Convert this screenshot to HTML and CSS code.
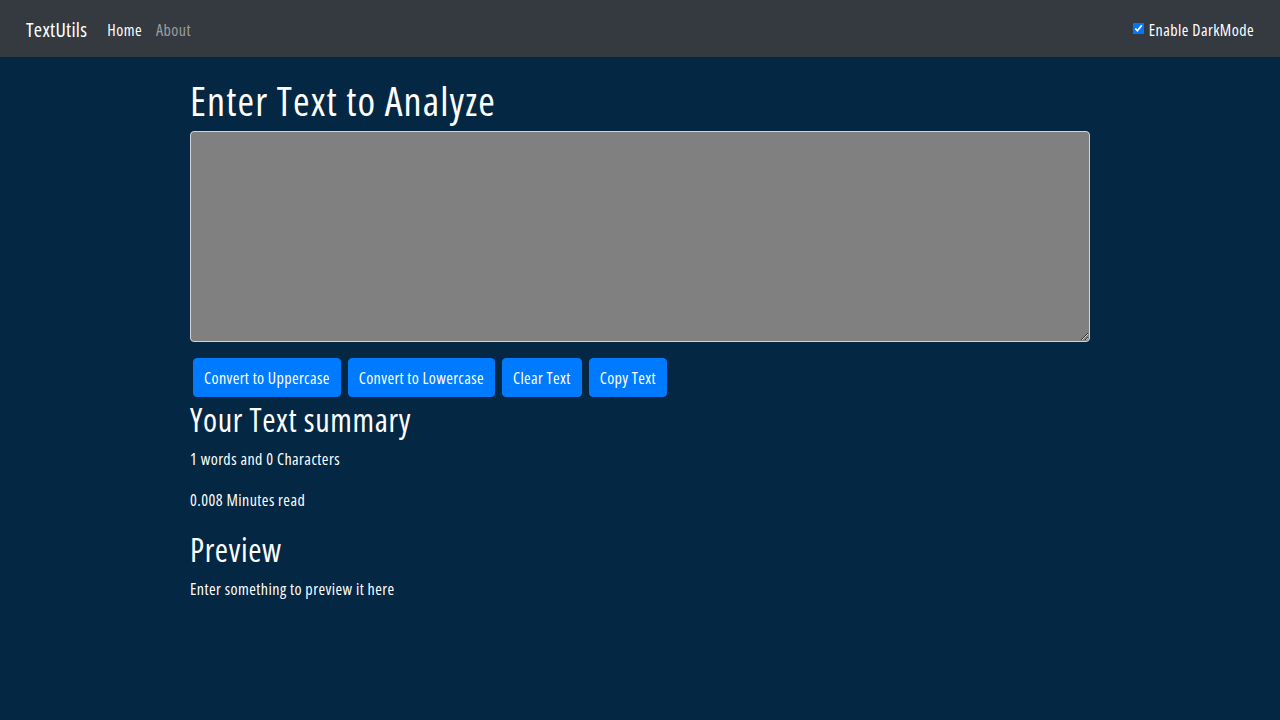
FILE: index.html
```html
<!DOCTYPE html>
<html lang="en">
<head>
<meta charset="utf-8">
<title>TextUtils</title>
<link rel="stylesheet" href="styles.css">
</head>
<body>
<nav class="navbar">
  <div class="nav-left">
    <a class="brand" href="#">TextUtils</a>
    <a class="nav-link active" href="#">Home</a>
    <a class="nav-link" href="#">About</a>
  </div>
  <label class="switch">
    <input type="checkbox" checked>
    <span>Enable DarkMode</span>
  </label>
</nav>
<main class="container">
  <h1 class="title">Enter Text to Analyze</h1>
  <textarea class="text-box" rows="8"></textarea>
  <div class="actions">
    <button class="btn">Convert to Uppercase</button>
    <button class="btn">Convert to Lowercase</button>
    <button class="btn">Clear Text</button>
    <button class="btn">Copy Text</button>
  </div>
  <h2 class="section">Your Text summary</h2>
  <p class="line">1 words and 0 Characters</p>
  <p class="line">0.008 Minutes read</p>
  <h2 class="section preview">Preview</h2>
  <p class="line">Enter something to preview it here</p>
</main>
</body>
</html>
```

FILE: styles.css
```css
* { box-sizing: border-box; }
html, body { margin: 0; padding: 0; }
body {
  background: #042743;
  color: #ffffff;
  font-family: "Open Sans", sans-serif;
  font-stretch: condensed;
  letter-spacing: 0.028em;
  font-size: 16px;
  line-height: 24px;
  min-height: 720px;
}
.navbar {
  height: 57px;
  background: #343a40;
  display: flex;
  align-items: center;
  justify-content: space-between;
  padding: 2px 26px 0;
}
.nav-left { display: flex; align-items: center; }
.brand {
  color: #fff;
  text-decoration: none;
  font-size: 20px;
  letter-spacing: 0.015em;
  margin-right: 20px;
}
.nav-link {
  color: rgba(255,255,255,0.5);
  text-decoration: none;
  font-size: 16px;
  margin-right: 14px;
}
.nav-link.active { color: #fff; }
.switch {
  display: flex;
  align-items: center;
  gap: 5px;
  font-size: 16px;
  color: #fff;
}
.switch input { margin: -2px 0 0; width: 11px; height: 11px; }
.container {
  width: 900px;
  margin: 0 auto;
  padding-top: 20px;
  display: flex;
  flex-direction: column;
  align-items: flex-start;
}
.title {
  font-size: 40px;
  font-weight: 400;
  line-height: 48px;
  letter-spacing: 0.028em;
  margin: 0 0 6px;
}
.text-box {
  width: 900px;
  height: 211px;
  background: #808080;
  color: #fff;
  border: 1px solid #ced4da;
  border-radius: 4px;
  padding: 6px 12px;
  font: inherit;
  margin-bottom: 16px;
}
.actions { display: flex; gap: 7px; padding-left: 3px; }
.btn {
  background: #007bff;
  color: #fff;
  border: 1px solid #007bff;
  border-radius: 4px;
  height: 39px;
  padding: 1px 10px 0;
  font: inherit;
  font-size: 16px;
  letter-spacing: 0.024em;
}
.section {
  font-size: 32px;
  font-weight: 400;
  line-height: 38px;
  letter-spacing: 0.02em;
  margin: 4px 0 8px;
}
.section.preview { margin-top: 2px; }
.line { margin: 0 0 17px; }
```
